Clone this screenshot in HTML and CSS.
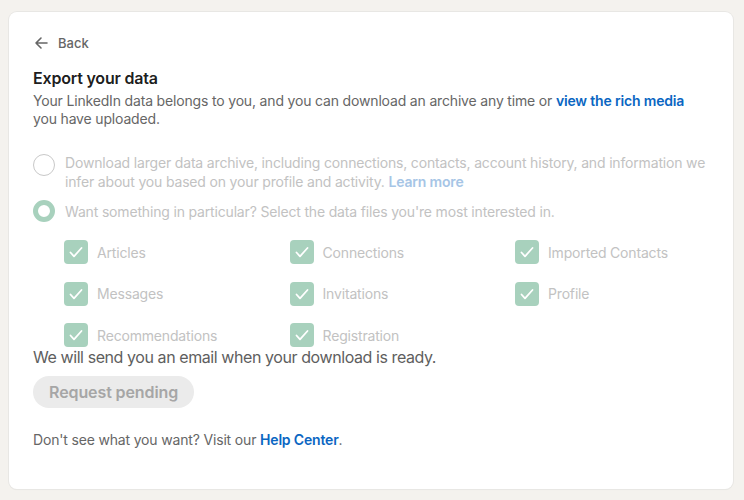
FILE: index.html
```html
<!DOCTYPE html>
<html>
<head>
<meta charset="utf-8">
<link rel="stylesheet" href="styles.css">
</head>
<body>
<main class="card">
  <a class="back" href="#">
    <svg class="back-icon" viewBox="0 0 16 16" width="16" height="16" aria-hidden="true">
      <path d="M14 8H3M8 3L3 8l5 5" fill="none" stroke="#666" stroke-width="1.6" stroke-linecap="round" stroke-linejoin="round"/>
    </svg>
    <span>Back</span>
  </a>
  <h1 class="title">Export your data</h1>
  <p class="desc">Your LinkedIn data belongs to you, and you can download an archive any time or <a class="link" href="#">view the rich media</a> you have uploaded.</p>

  <div class="option">
    <span class="radio"></span>
    <span class="option-text">Download larger data archive, including connections, contacts, account history, and information we infer about you based on your profile and activity. <a class="link-disabled" href="#">Learn more</a></span>
  </div>
  <div class="option option-single">
    <span class="radio radio-on"></span>
    <span class="option-text">Want something in particular? Select the data files you're most interested in.</span>
  </div>

  <div class="checks">
    <div class="check"><span class="box"><svg viewBox="0 0 24 24" width="24" height="24"><path d="M6.5 12.5l3.5 3.8 7.5-8.3" fill="none" stroke="#fff" stroke-width="1.8" stroke-linecap="round" stroke-linejoin="round"/></svg></span><span class="check-label">Articles</span></div>
    <div class="check"><span class="box"><svg viewBox="0 0 24 24" width="24" height="24"><path d="M6.5 12.5l3.5 3.8 7.5-8.3" fill="none" stroke="#fff" stroke-width="1.8" stroke-linecap="round" stroke-linejoin="round"/></svg></span><span class="check-label">Connections</span></div>
    <div class="check"><span class="box"><svg viewBox="0 0 24 24" width="24" height="24"><path d="M6.5 12.5l3.5 3.8 7.5-8.3" fill="none" stroke="#fff" stroke-width="1.8" stroke-linecap="round" stroke-linejoin="round"/></svg></span><span class="check-label">Imported Contacts</span></div>
    <div class="check"><span class="box"><svg viewBox="0 0 24 24" width="24" height="24"><path d="M6.5 12.5l3.5 3.8 7.5-8.3" fill="none" stroke="#fff" stroke-width="1.8" stroke-linecap="round" stroke-linejoin="round"/></svg></span><span class="check-label">Messages</span></div>
    <div class="check"><span class="box"><svg viewBox="0 0 24 24" width="24" height="24"><path d="M6.5 12.5l3.5 3.8 7.5-8.3" fill="none" stroke="#fff" stroke-width="1.8" stroke-linecap="round" stroke-linejoin="round"/></svg></span><span class="check-label">Invitations</span></div>
    <div class="check"><span class="box"><svg viewBox="0 0 24 24" width="24" height="24"><path d="M6.5 12.5l3.5 3.8 7.5-8.3" fill="none" stroke="#fff" stroke-width="1.8" stroke-linecap="round" stroke-linejoin="round"/></svg></span><span class="check-label">Profile</span></div>
    <div class="check"><span class="box"><svg viewBox="0 0 24 24" width="24" height="24"><path d="M6.5 12.5l3.5 3.8 7.5-8.3" fill="none" stroke="#fff" stroke-width="1.8" stroke-linecap="round" stroke-linejoin="round"/></svg></span><span class="check-label">Recommendations</span></div>
    <div class="check"><span class="box"><svg viewBox="0 0 24 24" width="24" height="24"><path d="M6.5 12.5l3.5 3.8 7.5-8.3" fill="none" stroke="#fff" stroke-width="1.8" stroke-linecap="round" stroke-linejoin="round"/></svg></span><span class="check-label">Registration</span></div>
  </div>

  <p class="notice">We will send you an email when your download is ready.</p>
  <button class="pending" type="button" disabled>Request pending</button>
  <p class="help">Don't see what you want? Visit our <a class="link" href="#">Help Center</a>.</p>
</main>
</body>
</html>
```

FILE: styles.css
```css
html, body {
  margin: 0;
  padding: 0;
  background: #f4f2ee;
}
body {
  font-family: Inter, "Noto Sans", "Liberation Sans", sans-serif;
  -webkit-font-smoothing: antialiased;
  letter-spacing: -0.17px;
  padding: 12px 11px 11px 9px;
}
.card {
  background: #fff;
  border-radius: 8px;
  box-shadow: 0 0 0 1px #e8e7e4, 0 1px 1px rgba(0,0,0,0.06);
  height: 477px;
  box-sizing: border-box;
  padding: 19px 24px 0 24px;
}
.back {
  display: flex;
  align-items: center;
  gap: 9px;
  height: 24px;
  color: #666;
  font-size: 13px;
  font-weight: 500;
  letter-spacing: 0;
  text-decoration: none;
  width: max-content;
}
.back-icon { display: block; }
.title {
  margin: 11px 0 0 0;
  font-size: 16px;
  line-height: 24px;
  font-weight: 600;
  letter-spacing: -0.2px;
  color: rgba(0,0,0,0.9);
}
.desc {
  margin: 2px 0 0 0;
  font-size: 14px;
  line-height: 18px;
  color: #666;
}
.link {
  color: #0a66c2;
  font-weight: 600;
  text-decoration: none;
}
.option {
  display: flex;
  align-items: flex-start;
  gap: 10px;
  margin-top: 25px;
}
.option-single {
  margin-top: 9px;
  align-items: center;
}
.radio {
  flex: none;
  width: 22px;
  height: 22px;
  box-sizing: border-box;
  border-radius: 50%;
  border: 1px solid #c8c8c8;
  margin-top: 1px;
}
.option-single .radio { margin-top: 0; }
.radio-on {
  border: 5px solid #a8d1bd;
}
.option-text {
  font-size: 14px;
  line-height: 19px;
  color: #c2c2c2;
}
.link-disabled {
  color: #a6c5e6;
  font-weight: 600;
  text-decoration: none;
}
.checks {
  display: grid;
  grid-template-columns: repeat(3, 225.5px);
  row-gap: 17.5px;
  margin: 18px 0 -2px 31px;
}
.check {
  display: flex;
  align-items: center;
  gap: 9px;
  height: 24px;
}
.box {
  flex: none;
  width: 24px;
  height: 24px;
  border-radius: 4px;
  background: #a8d1bd;
}
.box svg { display: block; }
.check-label {
  font-size: 14px;
  color: #c2c2c2;
}
.notice {
  margin: 0;
  font-size: 16px;
  line-height: 24px;
  letter-spacing: -0.42px;
  color: #5e5e5e;
}
.pending {
  display: block;
  margin-top: 7px;
  height: 32px;
  padding: 0 16px;
  border: none;
  border-radius: 16px;
  background: #ebebeb;
  color: #a6a6a6;
  font-family: inherit;
  font-size: 16px;
  font-weight: 600;
  letter-spacing: -0.1px;
}
.help {
  margin: 22px 0 0 0;
  font-size: 14px;
  line-height: 20px;
  color: #666;
}
```
